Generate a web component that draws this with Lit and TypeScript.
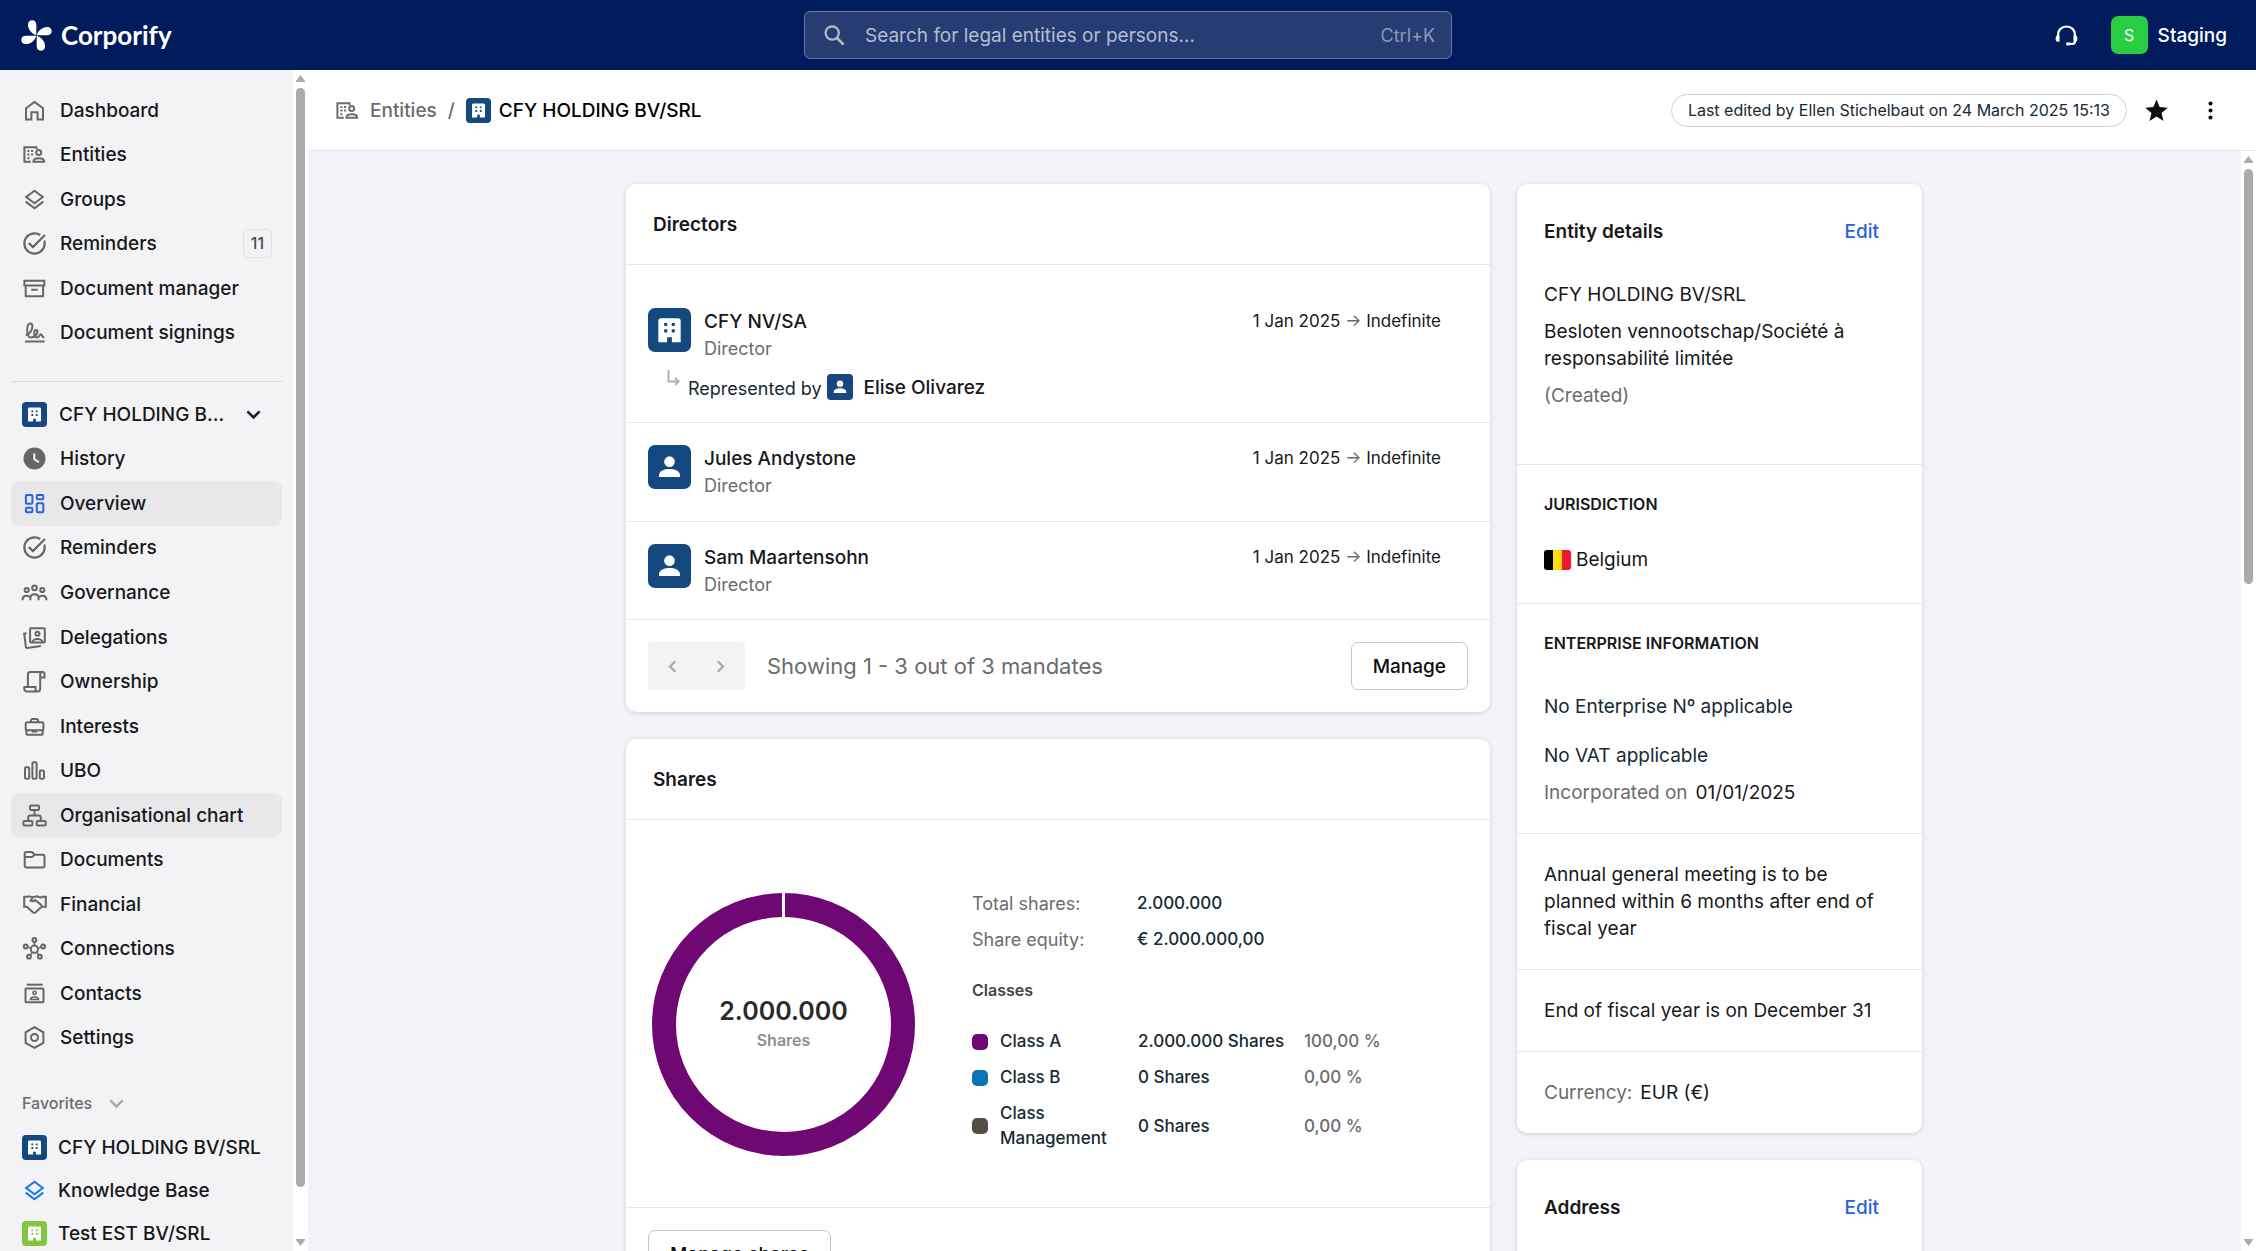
import { LitElement, html, svg, css, nothing } from "lit";
import { customElement, property } from "lit/decorators.js";
import { classMap } from "lit/directives/class-map.js";

interface NavItem {
  icon: string;
  label: string;
  badge?: string;
  active?: boolean;
  hover?: boolean;
}

const GLYPHS: Record<string, { box: number; art: unknown }> = {
  home: { box: 27, art: svg`<path d="M5 11.2L13.5 5 22 11.2v11.3h-5.4v-7.2h-6.2v7.2H5z"/>` },
  entities: {
    box: 27,
    art: svg`<path d="M15.5 8.2V6.2H3.4v14.6h6.4"/><circle cx="17.7" cy="11.6" r="2.5"/><path d="M12.4 20.7c0-2.6 2.7-3.4 5.4-3.4s5.4.8 5.4 3.4z"/>
      <path class="solid" d="M6.4 9h2v2h-2zM10.1 9h2v2h-2zM6.4 12.6h2v2h-2zM10.1 12.6h2v2h-2zM6.4 16.2h2v2h-2z"/>`,
  },
  layers: { box: 27, art: svg`<path d="M13.5 4.8l8.3 6.2-8.3 6.2L5.2 11z"/><path d="M4.7 15.6l8.8 6.6 8.8-6.6"/>` },
  check: {
    box: 24,
    art: svg`<path class="solid" d="M22 5.18L10.59 16.6l-4.24-4.24 1.41-1.41 2.83 2.83 10-10L22 5.18zm-2.21 5.04c.13.57.21 1.17.21 1.78 0 4.42-3.58 8-8 8s-8-3.58-8-8 3.58-8 8-8c1.58 0 3.04.46 4.28 1.25l1.44-1.44A9.9 9.9 0 0 0 12 2C6.48 2 2 6.48 2 12s4.48 10 10 10 10-4.48 10-10c0-1.19-.22-2.33-.6-3.39l-1.61 1.61z"/>`,
  },
  archive: { box: 27, art: svg`<path d="M3.4 5.8h19.9v4.6H3.4zM4.7 10.4V21.3h17.4V10.4M10.2 14.8h6.4"/>` },
  signature: {
    box: 27,
    art: svg`<path d="M4 22.5h19.6"/><path d="M4.8 16.4c3.800-1.200 6.600-5.400 6.600-8.800 0-1.900-.8-3-2.100-3-2 0-3.100 2.700-3.100 6.100 0 4.600 1.300 7.800 3.700 7.800 3.400 0 6.700-3.600 6.700-5.900 0-1-.6-1.600-1.400-1.600-1.300 0-2 1.500-2 3.200 0 2.500 1.100 4.200 2.900 4.200 2.200 0 2.600-3.200 3.900-3.200 1.200 0 .6 3.200 3.200 3.200"/>`,
  },
  history: { box: 27, art: svg`<circle class="solid" cx="13.5" cy="13.5" r="11"/><path class="cut" d="M13.3 8.5v5.8l4.6 2.8"/>` },
  overview: {
    box: 27,
    art: svg`<rect x="4.9" y="4.9" width="6.5" height="8.9" rx="1"/><rect x="15.8" y="4.9" width="6.5" height="4.4" rx="1"/><rect x="4.9" y="17.8" width="6.5" height="4.4" rx="1"/><rect x="15.8" y="13.3" width="6.5" height="8.9" rx="1"/>`,
  },
  people: {
    box: 27,
    art: svg`<circle cx="13.5" cy="8.9" r="2.3"/><circle cx="5.7" cy="11" r="2.1"/><circle cx="21.3" cy="11" r="2.1"/>
      <path d="M9.4 21.2v-1.9c0-2.7 1.5-4.1 4.1-4.1s4.1 1.4 4.1 4.1v1.900M1.6 21.2v-.8c0-2.5 1.5-3.7 3.9-3.7 1.4 0 2.6.4 3.4 1.3M25.4 21.2v-.8c0-2.5-1.5-3.7-3.9-3.7-1.4 0-2.6.4-3.4 1.3"/>`,
  },
  delegations: {
    box: 27,
    art: svg`<rect x="9.1" y="4.3" width="14.7" height="14.3" rx=".8"/><circle cx="16.5" cy="9.8" r="2"/><path d="M11.5 18.2c.6-2.4 2.6-3.1 5-3.1s4.4.7 5 3.1"/><path d="M5.6 9.3l-2.4.3 1.7 13.5c.1.6.5.9 1.1.8l13.9-1.9"/>`,
  },
  scroll: {
    box: 27,
    art: svg`<path d="M6.9 19V6.7c0-1.6.9-2.6 2.4-2.6h12.2c1.3 0 2 .9 2 2.1v3.3h-4.3M19.2 9.5V7c0-1.6.3-2.9 1.8-2.9M19.2 9.5v11c0 1.8-1 2.9-2.6 2.9H5.7c-1.5 0-2.4-.9-2.4-2.3v-2h11.2v1.7c0 1.5.6 2.5 2 2.6"/>`,
  },
  briefcase: { box: 27, art: svg`<rect x="4.7" y="9.3" width="17.7" height="8" rx="1.6"/><path d="M10 9V7.6c0-1 .6-1.6 1.5-1.6h4c.9 0 1.5.6 1.5 1.6V9M5.4 17.3v3.4c0 .7.4 1.1 1 1.1h14.3c.6 0 1-.4 1-1.1v-3.4M11.8 17.3v1.2h3.5v-1.2"/>` },
  bars: { box: 27, art: svg`<rect x="4" y="10.3" width="4.2" height="11.4" rx="1.2"/><rect x="11.4" y="5.3" width="4.2" height="16.4" rx="1.2"/><rect x="18.8" y="13.5" width="4.2" height="8.2" rx="1.2"/>` },
  orgchart: { box: 27, art: svg`<rect x="9" y="3.5" width="9" height="4.4" rx="1"/><rect x="2.4" y="19" width="9" height="4.4" rx="1"/><rect x="15.7" y="19" width="9" height="4.4" rx="1"/><path d="M13.5 8v5.3M7.2 19v-3.4c0-1.3.8-2.1 2-2.1h8.6c1.2 0 2 .8 2 2.1V19"/>` },
  folder: { box: 27, art: svg`<path d="M3.7 20V7.4c0-.9.5-1.4 1.4-1.4h5.2c.7 0 1.3.3 1.7.9l1.3 1.8h8.8c.9 0 1.4.5 1.4 1.4V20c0 .9-.5 1.4-1.4 1.4H5.1c-.9 0-1.4-.5-1.4-1.4zM4 10.9h6.5c.9 0 1.6-.5 2.2-1.5"/>` },
  handshake: { box: 27, art: svg`<path d="M3.2 5.7v10h2.6l6.4 5.8c.8.7 1.4.7 2.2 0l6.3-5.8h4.1v-10h-3.1l-1.7 1-4.2-1.3-3.7.9-3.9-.9-2.5.4zM12 6.4L9.5 9.6c1.7 1 3.3.8 4.7-.6l5.7 4.6c.7.7.8 1.4.8 2.1"/>` },
  hub: {
    box: 27,
    art: svg`<circle cx="13.4" cy="14.2" r="3.6"/><circle cx="13.4" cy="5" r="1.9"/><circle cx="4.7" cy="11.5" r="1.9"/><circle cx="22.1" cy="11.5" r="1.9"/><circle cx="8" cy="21.7" r="1.9"/><circle cx="18.9" cy="21.7" r="1.9"/>
      <path stroke-width="1.5" d="M13.4 7v3.5M6.6 12.1l3.3 1M20.2 12.1l-3.3 1M9.1 20.1l2.1-2.8M17.8 20.1l-2.1-2.8"/>`,
  },
  contacts: { box: 27, art: svg`<path d="M5.7 4.7h16"/><rect x="4.5" y="8.5" width="18" height="13.8" rx=".8"/><circle cx="13.5" cy="12.9" r="1.6" stroke-width="1.6"/><path stroke-width="1.6" d="M9.4 19.5c.3-1.9 2.1-2.5 4.1-2.5s3.8.6 4.1 2.5z"/>` },
  settings: { box: 27, art: svg`<path d="M13.5 3.2l8.9 5.1v10.5l-8.9 5.1-8.9-5.1V8.3z"/><circle cx="13.5" cy="13.5" r="3.5"/>` },
  chevron: { box: 27, art: svg`<path stroke-width="2.6" d="M7.4 10.4l6.1 6 6.1-6"/>` },
  search: { box: 27, art: svg`<circle cx="11.2" cy="11" r="6.6" stroke-width="2.2"/><path stroke-width="2.6" d="M16 16l6.6 6.6"/>` },
  headset: {
    box: 27,
    art: svg`<path stroke-width="2.2" d="M5 14.5v-1.7c0-4.8 3.6-8.3 8.500-8.300s8.500 3.500 8.500 8.300v6.400c0 1.700-.9 2.700-2.700 2.700h-4.200"/>
      <path class="solid" d="M5.200 13.200h1.300v6.600H5.200c-1.500 0-2.500-1-2.500-2.400v-1.800c0-1.400 1-2.400 2.500-2.400zM21.800 13.200h-1.300v6.600h1.300c1.500 0 2.500-1 2.500-2.400v-1.800c0-1.400-1-2.400-2.500-2.400zM13.500 20.600h3.200v3h-2c-.9 0-1.600-.6-1.600-1.500s0-1.500.4-1.500z"/>`,
  },
  star: { box: 24, art: svg`<path class="solid" stroke-linejoin="round" d="M12 17.4l6.2 3.9-1.7-7.1 5.5-4.7-7.2-.6L12 2.2 9.2 8.9 2 9.5l5.5 4.7-1.7 7.1z"/>` },
  dots: { box: 24, art: svg`<g class="solid"><circle cx="12" cy="5.8" r="1.8"/><circle cx="12" cy="12" r="1.8"/><circle cx="12" cy="18.2" r="1.8"/></g>` },
  left: { box: 27, art: svg`<path stroke-width="2.3" d="M16.3 8.2L11 13.5l5.3 5.3"/>` },
  right: { box: 27, art: svg`<path stroke-width="2.3" d="M10.7 8.2l5.3 5.3-5.3 5.3"/>` },
};

@customElement("ui-icon")
class UiIcon extends LitElement {
  @property() name = "home";
  static styles = css`
    :host { display: inline-flex; flex: none; width: 27px; height: 27px; }
    svg { width: 100%; height: 100%; fill: none; stroke: currentColor; stroke-width: 2; }
    .solid { fill: currentColor; stroke: none; }
    .cut { stroke: #f3f3f5; stroke-width: 2; }
  `;
  render() {
    const glyph = GLYPHS[this.name];
    return html`<svg viewBox="0 0 ${glyph.box} ${glyph.box}" aria-hidden="true">${glyph.art}</svg>`;
  }
}

@customElement("ui-avatar")
class UiAvatar extends LitElement {
  @property() kind: "company" | "person" = "company";
  static styles = css`
    :host { display: inline-flex; flex: none; width: 25px; height: 25px; border-radius: 4px; background: #14487f; color: #fff; }
    svg { width: 100%; height: 100%; fill: currentColor; }
  `;
  render() {
    return this.kind === "company"
      ? html`<svg viewBox="0 0 25 25" aria-hidden="true"><path fill-rule="evenodd" d="M7.5 5.6h10c.9 0 1.5.6 1.5 1.5V19.6h-5.1v-2.9h-2.8v2.9H6V7.1c0-.9.6-1.5 1.5-1.5zM9.4 8.4v1.8h1.8V8.4zm4.4 0v1.8h1.8V8.4zM9.4 12.1v1.8h1.8v-1.8zm4.4 0v1.8h1.8v-1.8z"/></svg>`
      : html`<svg viewBox="0 0 25 25" aria-hidden="true"><circle cx="12.5" cy="9.4" r="3.1"/><path d="M6.4 18.3v-1c0-2.7 3.3-3.7 6.1-3.7s6.1 1 6.1 3.7v1z"/></svg>`;
  }
}

@customElement("ui-scrollbar")
class UiScrollbar extends LitElement {
  @property({ type: Number }) share = 100;
  static styles = css`
    :host { display: flex; flex-direction: column; flex: none; width: 15px; background: #fff; padding: 5px 0; box-sizing: border-box; align-items: center; }
    .arrow { width: 9px; height: 7px; fill: #aaaaae; flex: none; display: block; }
    .track { flex: 1; width: 9px; padding: 6px 0; min-height: 0; }
    .thumb { background: #aaaaae; border-radius: 5px; }
  `;
  render() {
    return html`
      <svg class="arrow" viewBox="0 0 9 7" aria-hidden="true"><path d="M4.5 0L9 6v1H0V6z"/></svg>
      <div class="track"><div class="thumb" style="height:${this.share}%"></div></div>
      <svg class="arrow" viewBox="0 0 9 7" aria-hidden="true"><path d="M4.5 7L9 1V0H0v1z"/></svg>
    `;
  }
}

@customElement("app-root")
class AppRoot extends LitElement {
  private mainNav: NavItem[] = [
    { icon: "home", label: "Dashboard" },
    { icon: "entities", label: "Entities" },
    { icon: "layers", label: "Groups" },
    { icon: "check", label: "Reminders", badge: "11" },
    { icon: "archive", label: "Document manager" },
    { icon: "signature", label: "Document signings" },
  ];

  private entityNav: NavItem[] = [
    { icon: "history", label: "History" },
    { icon: "overview", label: "Overview", active: true },
    { icon: "check", label: "Reminders" },
    { icon: "people", label: "Governance" },
    { icon: "delegations", label: "Delegations" },
    { icon: "scroll", label: "Ownership" },
    { icon: "briefcase", label: "Interests" },
    { icon: "bars", label: "UBO" },
    { icon: "orgchart", label: "Organisational chart", hover: true },
    { icon: "folder", label: "Documents" },
    { icon: "handshake", label: "Financial" },
    { icon: "hub", label: "Connections" },
    { icon: "contacts", label: "Contacts" },
    { icon: "settings", label: "Settings" },
  ];

  private directors = [
    { name: "CFY NV/SA", kind: "company", representative: "Elise Olivarez" },
    { name: "Jules Andystone", kind: "person", representative: "" },
    { name: "Sam Maartensohn", kind: "person", representative: "" },
  ];

  private classes = [
    { name: "Class A", color: "#6f0873", shares: "2.000.000 Shares", part: "100,00 %" },
    { name: "Class B", color: "#0a74b5", shares: "0 Shares", part: "0,00 %" },
    { name: "Class Management", color: "#544e45", shares: "0 Shares", part: "0,00 %" },
  ];

  static styles = css`
    :host { display: flex; flex-direction: column; height: 100vh; overflow: hidden; font-family: Inter, "Liberation Sans", sans-serif; font-size: 19px; line-height: 27px; color: #18181b; background: #f2f3f8; }
    *, *::before { box-sizing: border-box; }
    a { color: inherit; text-decoration: none; }
    ul, dl, dd, h1, h2, h3, p { margin: 0; padding: 0; list-style: none; font-size: inherit; font-weight: inherit; }
    button { font: inherit; color: inherit; background: none; border: 0; padding: 0; cursor: pointer; }
    .muted { color: #6c6c6e; }
    .slate { color: #162a35; }
    .medium { font-weight: 500; }

    .topbar { flex: none; height: 70px; background: #001c5c; color: #fff; display: grid; grid-template-columns: 1fr minmax(0, 648px) 1fr; align-items: center; padding: 0 21px; }
    .brand { display: flex; align-items: center; gap: 9px; font-family: Lato, sans-serif; font-weight: 700; font-size: 26px; line-height: 31px; }
    .brand svg { width: 31px; height: 31px; fill: #fff; }
    .search { display: flex; align-items: center; height: 48px; padding: 0 16px; border: 1px solid #6677a0; border-radius: 6px; background: #263c73; color: #b5bdd0; }
    .search input { flex: 1; min-width: 0; margin-left: 17px; padding: 0; border: 0; outline: 0; background: none; font: inherit; color: inherit; }
    .search input::placeholder { color: #b5bdd0; opacity: 1; }
    .search kbd { font: inherit; font-size: 18px; color: #8c98b8; }
    .account { display: flex; align-items: center; justify-content: flex-end; font-weight: 500; padding-right: 8px; }
    .account button { display: flex; align-items: center; gap: 10px; }
    .account .user { margin-left: 31px; }
    .initial { width: 37px; height: 38px; border-radius: 7px; background: #28cd41; display: grid; place-items: center; font-size: 16px; font-weight: 400; }

    .shell { flex: 1; min-height: 0; display: flex; }
    .sidebar { width: 293px; flex: none; display: flex; flex-direction: column; background: #f3f3f5; padding: 18px 11px 5px; font-weight: 500; overflow: hidden; }
    .nav { display: grid; grid-auto-rows: minmax(27px, 1fr); min-height: 0; }
    .nav.primary { flex: 6 1 0; }
    .nav.entity { flex: 15 1 0; }
    .link { display: flex; align-items: center; width: 100%; height: 100%; padding: 0 10px; gap: 12px; border-radius: 8px; text-align: left; }
    .link ui-icon { color: #666; }
    .link.on, .link.over { background: #e8e8ea; }
    .link.on ui-icon { color: #2b62dc; }
    .link .grow { flex: 1; white-space: nowrap; }
    .badge { min-width: 29px; height: 29px; border: 1px solid #e3e3e5; border-radius: 5px; display: grid; place-items: center; font-size: 16px; color: #4b4b4d; }
    .link.switch { padding: 0 15px 0 11px; }
    .link.switch ui-icon { color: #10242f; }
    .rule { flex: none; border: 0; border-top: 1px solid #d9d9dc; margin: 26px 0 10px; width: 100%; }
    .favorites { flex: none; padding: 30px 11px 0; display: grid; gap: 18px; }
    .favorites .toggle { display: flex; align-items: center; gap: 12px; font-size: 16px; color: #6c6c6e; font-weight: 500; }
    .favorites .toggle ui-icon { color: #aaa; }
    .favorites ul { display: grid; gap: 18px; }
    .favorites li a { display: flex; align-items: center; gap: 11px; height: 25px; white-space: nowrap; }
    .favorites ui-icon { margin: 0 -1px; color: #1677f2; }
    .green { background: #84c440; }

    .main { flex: 1; min-width: 0; display: flex; flex-direction: column; }
    .pagebar { flex: none; height: 81px; background: #fff; border-bottom: 1px solid #e6e6e8; display: flex; align-items: center; justify-content: space-between; padding: 0 32px 0 26px; }
    .crumbs { display: flex; align-items: center; font-weight: 500; }
    .crumbs .muted { display: flex; align-items: center; gap: 9px; font-weight: 500; }
    .crumbs .slash { margin: 0 11px; color: #6c6c6e; }
    .crumbs h1 { margin-left: 8px; color: #000; }
    .actions { display: flex; align-items: center; }
    .pill { height: 33px; padding: 0 16px; border: 1px solid #cfcfd1; border-radius: 17px; font-size: 16px; line-height: 31px; }
    .actions button { display: flex; }
    .actions .star { margin: 0 27px 0 16px; color: #0d0d0f; }
    .actions .more ui-icon { color: #000; }
    .canvas { flex: 1; min-height: 0; display: flex; }
    .scroller { flex: 1; min-width: 0; overflow: hidden; padding: 33px 25px 33px 24px; }
    .columns { max-width: 1296px; margin: 0 auto; display: grid; grid-template-columns: minmax(0, 32fr) minmax(0, 15fr); gap: 27px; align-items: start; }
    .stack { display: grid; gap: 27px; }

    .card { background: #fff; border-radius: 10px; box-shadow: 0 1px 4px rgba(20, 25, 60, 0.16); }
    .card-title { font-weight: 600; }
    .wide .card-title { height: 81px; padding: 27px; border-bottom: 1px solid #e6e6e8; }
    .outline { height: 48px; border: 1px solid #c6c6c9; border-radius: 7px; padding: 0 21px; font-weight: 500; color: #0d0d0f; background: #fff; }

    .director { display: grid; grid-template-columns: 43px 1fr auto; column-gap: 13px; padding: 22px 49px 22px 22px; border-bottom: 1px solid #e6e6e8; }
    .director.represented { padding-top: 43px; }
    .director:last-child { padding-bottom: 21px; }
    .director > ui-avatar { width: 43px; height: 44px; border-radius: 7px; }
    .director .role { font-size: 18px; }
    .term { font-size: 17px; }
    .proxy { grid-column: 1 / -1; display: flex; padding-left: 19px; margin-top: 12px; height: 26px; }
    .proxy svg { width: 13px; height: 16px; margin: -4px 8px 0 0; fill: none; stroke: #b4b4b6; stroke-width: 2; flex: none; }
    .proxy .slate { align-self: flex-end; font-size: 18px; line-height: 22px; }
    .proxy ui-avatar { width: 26px; height: 26px; margin: 0 11px 0 5px; }
    .card-foot { display: flex; align-items: center; padding: 22px; }
    .pager { display: flex; background: #f3f3f4; border-radius: 4px; color: #aaa; height: 48px; padding: 0 11px; gap: 21px; align-items: center; }
    .pager button { display: flex; }
    .count { flex: 1; margin-left: 22px; font-size: 22px; }

    .shares { display: flex; align-items: flex-end; gap: 57px; padding: 71px 26px 51px; border-bottom: 1px solid #e6e6e8; }
    .donut { flex: none; width: 263px; height: 263px; display: grid; place-items: center; }
    .donut > * { grid-area: 1 / 1; }
    .donut svg { width: 100%; height: 100%; }
    .donut .value { font-size: 25px; line-height: 32px; font-weight: 600; color: #2a2a2c; text-align: center; }
    .donut .unit { font-size: 16px; font-weight: 600; color: #8f8f92; text-align: center; }
    .facts { line-height: 25px; font-size: 18px; }
    .totals { display: grid; grid-template-columns: 165px auto; row-gap: 11px; }
    .totals dd, .classes { font-weight: 500; font-size: 17px; }
    .facts h3 { font-size: 16px; font-weight: 600; color: #444446; margin: 26px 0 20px; }
    .classes { border-collapse: collapse; }
    .classes td { padding: 6px 0 5px; vertical-align: middle; }
    .classes td:first-child { width: 166px; }
    .classes td:nth-child(2) { width: 166px; }
    .key { display: flex; align-items: center; gap: 12px; width: 138px; }
    .swatch { width: 16px; height: 16px; border-radius: 5px; flex: none; }

    .section { padding: 27px; border-bottom: 1px solid #e6e6e8; }
    .section:last-child { border-bottom: 0; }
    .section.lead { padding: 34px 27px 55px; }
    .section.titled { padding-top: 26px; }
    .section.place { padding-bottom: 30px; }
    .section .row { display: flex; justify-content: space-between; padding-right: 16px; margin-bottom: 36px; }
    .section .row a { color: #2b62dc; font-weight: 500; }
    .section .gap { margin-bottom: 10px; }
    .section .space { margin-bottom: 22px; }
    .section h3 { font-size: 16px; font-weight: 600; margin-bottom: 28px; }
    .section h3.tall { margin-bottom: 36px; }
    .section .muted + span { margin-left: 8px; }
    .country { display: flex; align-items: center; gap: 5px; }
    .country svg { width: 27px; height: 20px; border-radius: 3px; }
  `;

  private renderNav(item: NavItem) {
    return html`<li>
      <a href="#" class=${classMap({ link: true, on: !!item.active, over: !!item.hover })}>
        <ui-icon name=${item.icon}></ui-icon><span class="grow">${item.label}</span>
        ${item.badge ? html`<span class="badge">${item.badge}</span>` : nothing}
      </a>
    </li>`;
  }

  private renderTopbar() {
    const petal = "M15.3 15.3C10.6 14 7 9.6 7 4.8 7 2 8.7.3 11.1.3c2.7 0 4.2 1.8 4.2 4.7z";
    return html`<header class="topbar">
      <a class="brand" href="#">
        <svg viewBox="0 0 31 31" aria-hidden="true">${[0, 90, 180, 270].map((turn) => svg`<path d=${petal} transform="rotate(${turn} 15.5 15.5)"/>`)}</svg>
        <span>Corporify</span>
      </a>
      <label class="search">
        <ui-icon name="search"></ui-icon>
        <input type="search" aria-label="Search" placeholder="Search for legal entities or persons..." />
        <kbd>Ctrl+K</kbd>
      </label>
      <div class="account">
        <button aria-label="Support"><ui-icon name="headset"></ui-icon></button>
        <button class="user"><span class="initial">S</span><span>Staging</span></button>
      </div>
    </header>`;
  }

  private renderSidebar() {
    return html`<nav class="sidebar">
        <ul class="nav primary">${this.mainNav.map((item) => this.renderNav(item))}</ul>
        <hr class="rule" />
        <ul class="nav entity">
          <li><button class="link switch"><ui-avatar></ui-avatar><span class="grow">CFY HOLDING B...</span><ui-icon name="chevron"></ui-icon></button></li>
          ${this.entityNav.map((item) => this.renderNav(item))}
        </ul>
        <div class="favorites">
          <button class="toggle">Favorites <ui-icon name="chevron"></ui-icon></button>
          <ul>
            <li><a href="#"><ui-avatar></ui-avatar>CFY HOLDING BV/SRL</a></li>
            <li><a href="#"><ui-icon name="layers"></ui-icon>Knowledge Base</a></li>
            <li><a href="#"><ui-avatar class="green"></ui-avatar>Test EST BV/SRL</a></li>
          </ul>
        </div>
      </nav>
      <ui-scrollbar share="96"></ui-scrollbar>`;
  }

  private renderDirectors() {
    return html`<section class="card wide">
      <h2 class="card-title">Directors</h2>
      <ul>
        ${this.directors.map(
          (d) => html`<li class=${classMap({ director: true, represented: !!d.representative })}>
            <ui-avatar kind=${d.kind}></ui-avatar>
            <div>
              <p class="medium">${d.name}</p>
              <p class="role muted">Director</p>
            </div>
            <p class="term">1 Jan 2025 <span class="muted">→</span> Indefinite</p>
            ${d.representative
              ? html`<div class="proxy">
                  <svg viewBox="0 0 13 16" aria-hidden="true"><path d="M1.5 0v11.5h9M8 8l3.5 3.5L8 15"/></svg>
                  <span class="slate">Represented by</span><ui-avatar kind="person"></ui-avatar><span class="medium">${d.representative}</span>
                </div>`
              : nothing}
          </li>`
        )}
      </ul>
      <div class="card-foot">
        <div class="pager">
          <button aria-label="Previous page"><ui-icon name="left"></ui-icon></button>
          <button aria-label="Next page"><ui-icon name="right"></ui-icon></button>
        </div>
        <p class="count muted">Showing 1 - 3 out of 3 mandates</p>
        <button class="outline">Manage</button>
      </div>
    </section>`;
  }

  private renderShares() {
    return html`<section class="card wide">
      <h2 class="card-title">Shares</h2>
      <div class="shares">
        <div class="donut">
          <svg viewBox="0 0 263 263" aria-hidden="true">
            <circle cx="131.5" cy="131.5" r="119.5" fill="none" stroke="#6f0873" stroke-width="24" />
            <path d="M131.5 0v26" stroke="#fff" stroke-width="3" />
          </svg>
          <div><p class="value">2.000.000</p><p class="unit">Shares</p></div>
        </div>
        <div class="facts">
          <dl class="totals">
            <dt class="muted">Total shares:</dt><dd class="slate">2.000.000</dd>
            <dt class="muted">Share equity:</dt><dd class="slate">€ 2.000.000,00</dd>
          </dl>
          <h3>Classes</h3>
          <table class="classes slate">
            <tbody>
              ${this.classes.map(
                (c) => html`<tr>
                  <td><span class="key"><span class="swatch" style="background:${c.color}"></span><span>${c.name}</span></span></td>
                  <td>${c.shares}</td>
                  <td class="muted">${c.part}</td>
                </tr>`
              )}
            </tbody>
          </table>
        </div>
      </div>
      <div class="card-foot"><button class="outline">Manage shares</button></div>
    </section>`;
  }

  private renderDetails() {
    return html`<section class="card">
        <div class="section lead">
          <div class="row"><h2 class="card-title">Entity details</h2><a href="#">Edit</a></div>
          <p class="gap">CFY HOLDING BV/SRL</p>
          <p class="gap">Besloten vennootschap/Société à responsabilité limitée</p>
          <p class="muted">(Created)</p>
        </div>
        <div class="section titled place">
          <h3>JURISDICTION</h3>
          <p class="country">
            <svg viewBox="0 0 27 20" aria-hidden="true"><path fill="#000" d="M0 0h9v20H0z"/><path fill="#ffd90c" d="M9 0h9v20H9z"/><path fill="#f31830" d="M18 0h9v20h-9z"/></svg>
            Belgium
          </p>
        </div>
        <div class="section titled">
          <h3 class="tall">ENTERPRISE INFORMATION</h3>
          <p class="slate space">No Enterprise Nº applicable</p>
          <p class="slate gap">No VAT applicable</p>
          <p><span class="muted">Incorporated on</span><span>01/01/2025</span></p>
        </div>
        <div class="section"><p>Annual general meeting is to be planned within 6 months after end of fiscal year</p></div>
        <div class="section"><p>End of fiscal year is on December 31</p></div>
        <div class="section"><p><span class="muted">Currency:</span><span>EUR (€)</span></p></div>
      </section>
      <section class="card">
        <div class="section lead">
          <div class="row"><h2 class="card-title">Address</h2><a href="#">Edit</a></div>
        </div>
      </section>`;
  }

  render() {
    return html`${this.renderTopbar()}
      <div class="shell">
        ${this.renderSidebar()}
        <main class="main">
          <div class="pagebar">
            <div class="crumbs">
              <a class="muted" href="#"><ui-icon name="entities"></ui-icon>Entities</a>
              <span class="slash">/</span>
              <ui-avatar></ui-avatar>
              <h1>CFY HOLDING BV/SRL</h1>
            </div>
            <div class="actions">
              <span class="pill slate">Last edited by Ellen Stichelbaut on 24 March 2025 15:13</span>
              <button class="star" aria-label="Favorite"><ui-icon name="star"></ui-icon></button>
              <button class="more" aria-label="More"><ui-icon name="dots"></ui-icon></button>
            </div>
          </div>
          <div class="canvas">
            <div class="scroller">
              <div class="columns">
                <div class="stack">${this.renderDirectors()}${this.renderShares()}</div>
                <div class="stack">${this.renderDetails()}</div>
              </div>
            </div>
            <ui-scrollbar share="39"></ui-scrollbar>
          </div>
        </main>
      </div>`;
  }
}
